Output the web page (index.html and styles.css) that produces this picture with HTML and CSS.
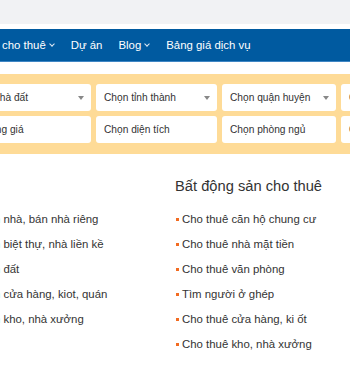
FILE: index.html
```html
<!DOCTYPE html>
<html lang="vi">
<head>
  <meta charset="UTF-8" />
  <meta name="viewport" content="width=device-width, initial-scale=1.0"/>
  <title>Bất động sản</title>
  <link rel="stylesheet" href="styles.css">
</head>
<body>
  <div class="topbar"></div>

  <nav class="menu">
    <ul class="menu-list">
      <li>Nhà đất cho thuê<span class="chev"></span></li>
      <li>Dự án</li>
      <li>Blog<span class="chev"></span></li>
      <li>Bảng giá dịch vụ</li>
    </ul>
  </nav>

  <div class="search">
    <div class="search-grid">
      <div class="field select">Loại nhà đất</div>
      <div class="field select">Chọn tỉnh thành</div>
      <div class="field select">Chọn quận huyện</div>
      <div class="field select">Chọn phường xã</div>
      <div class="field">Khoảng giá</div>
      <div class="field">Chọn diện tích</div>
      <div class="field">Chọn phòng ngủ</div>
      <div class="field">Chọn hướng nhà</div>
    </div>
  </div>

  <div class="links">
    <div class="col">
      <h2 class="col-title">&nbsp;</h2>
      <ul class="col-list">
        <li>Bán nhà, bán nhà riêng</li>
        <li>Bán biệt thự, nhà liền kề</li>
        <li>Bán đất</li>
        <li>Bán cửa hàng, kiot, quán</li>
        <li>Bán kho, nhà xưởng</li>
      </ul>
    </div>
    <div class="col">
      <h2 class="col-title">Bất động sản cho thuê</h2>
      <ul class="col-list">
        <li>Cho thuê căn hộ chung cư</li>
        <li>Cho thuê nhà mặt tiền</li>
        <li>Cho thuê văn phòng</li>
        <li>Tìm người ở ghép</li>
        <li>Cho thuê cửa hàng, ki ốt</li>
        <li>Cho thuê kho, nhà xưởng</li>
      </ul>
    </div>
  </div>
</body>
</html>
```

FILE: styles.css
```css
body {
  margin: 0;
  padding: 0;
  font-family: "Liberation Sans", Arial, sans-serif;
  font-size: 11.4px;
  color: #333;
  background: #fff;
  overflow: hidden;
}

.topbar {
  height: 24px;
  background-color: #f1f2f4;
}

.menu {
  margin-top: 5px;
  height: 32px;
  background-color: #005aa0;
  border-bottom: 1px solid #3f86c4;
  overflow: hidden;
}

.menu-list {
  list-style: none;
  margin: 0 0 0 -41px;
  padding: 0;
  display: flex;
  gap: 16px;
  white-space: nowrap;
}

.menu-list li {
  color: #fff;
  font-size: 11.4px;
  line-height: 33px;
}

.chev {
  display: inline-block;
  width: 3px;
  height: 3px;
  border-right: 1px solid #dfe9f3;
  border-bottom: 1px solid #dfe9f3;
  transform: rotate(45deg);
  margin: 0 1px 3px 4px;
}

.search {
  margin-top: 12px;
  background-color: #fedb97;
  padding: 10px 0 11px;
  overflow: hidden;
}

.search-grid {
  margin-left: -36px;
  display: grid;
  grid-template-columns: 127px 121px 114px 100px;
  gap: 5px;
}

.field {
  height: 27px;
  line-height: 27px;
  padding: 0 8px;
  background-color: #fff;
  border-radius: 3px;
  color: #333;
  font-size: 10.2px;
  white-space: nowrap;
  overflow: hidden;
  position: relative;
}

.field.select::after {
  content: "";
  position: absolute;
  right: 7px;
  top: 12px;
  border-left: 3.5px solid transparent;
  border-right: 3.5px solid transparent;
  border-top: 4px solid #888;
}

.links {
  margin-left: -27px;
  display: grid;
  grid-template-columns: 202px 202px;
  padding-top: 21px;
}

.col-title {
  margin: 0 0 10px;
  font-size: 14.7px;
  font-weight: normal;
  color: #333;
  line-height: 22px;
}

.col-list {
  list-style: none;
  margin: 0;
  padding: 0;
}

.col-list li {
  line-height: 25px;
  white-space: nowrap;
  padding-left: 7px;
  position: relative;
}

.col-list li::before {
  content: "";
  position: absolute;
  left: 1px;
  top: 11px;
  width: 3px;
  height: 3px;
  background-color: #f26b21;
}
```
